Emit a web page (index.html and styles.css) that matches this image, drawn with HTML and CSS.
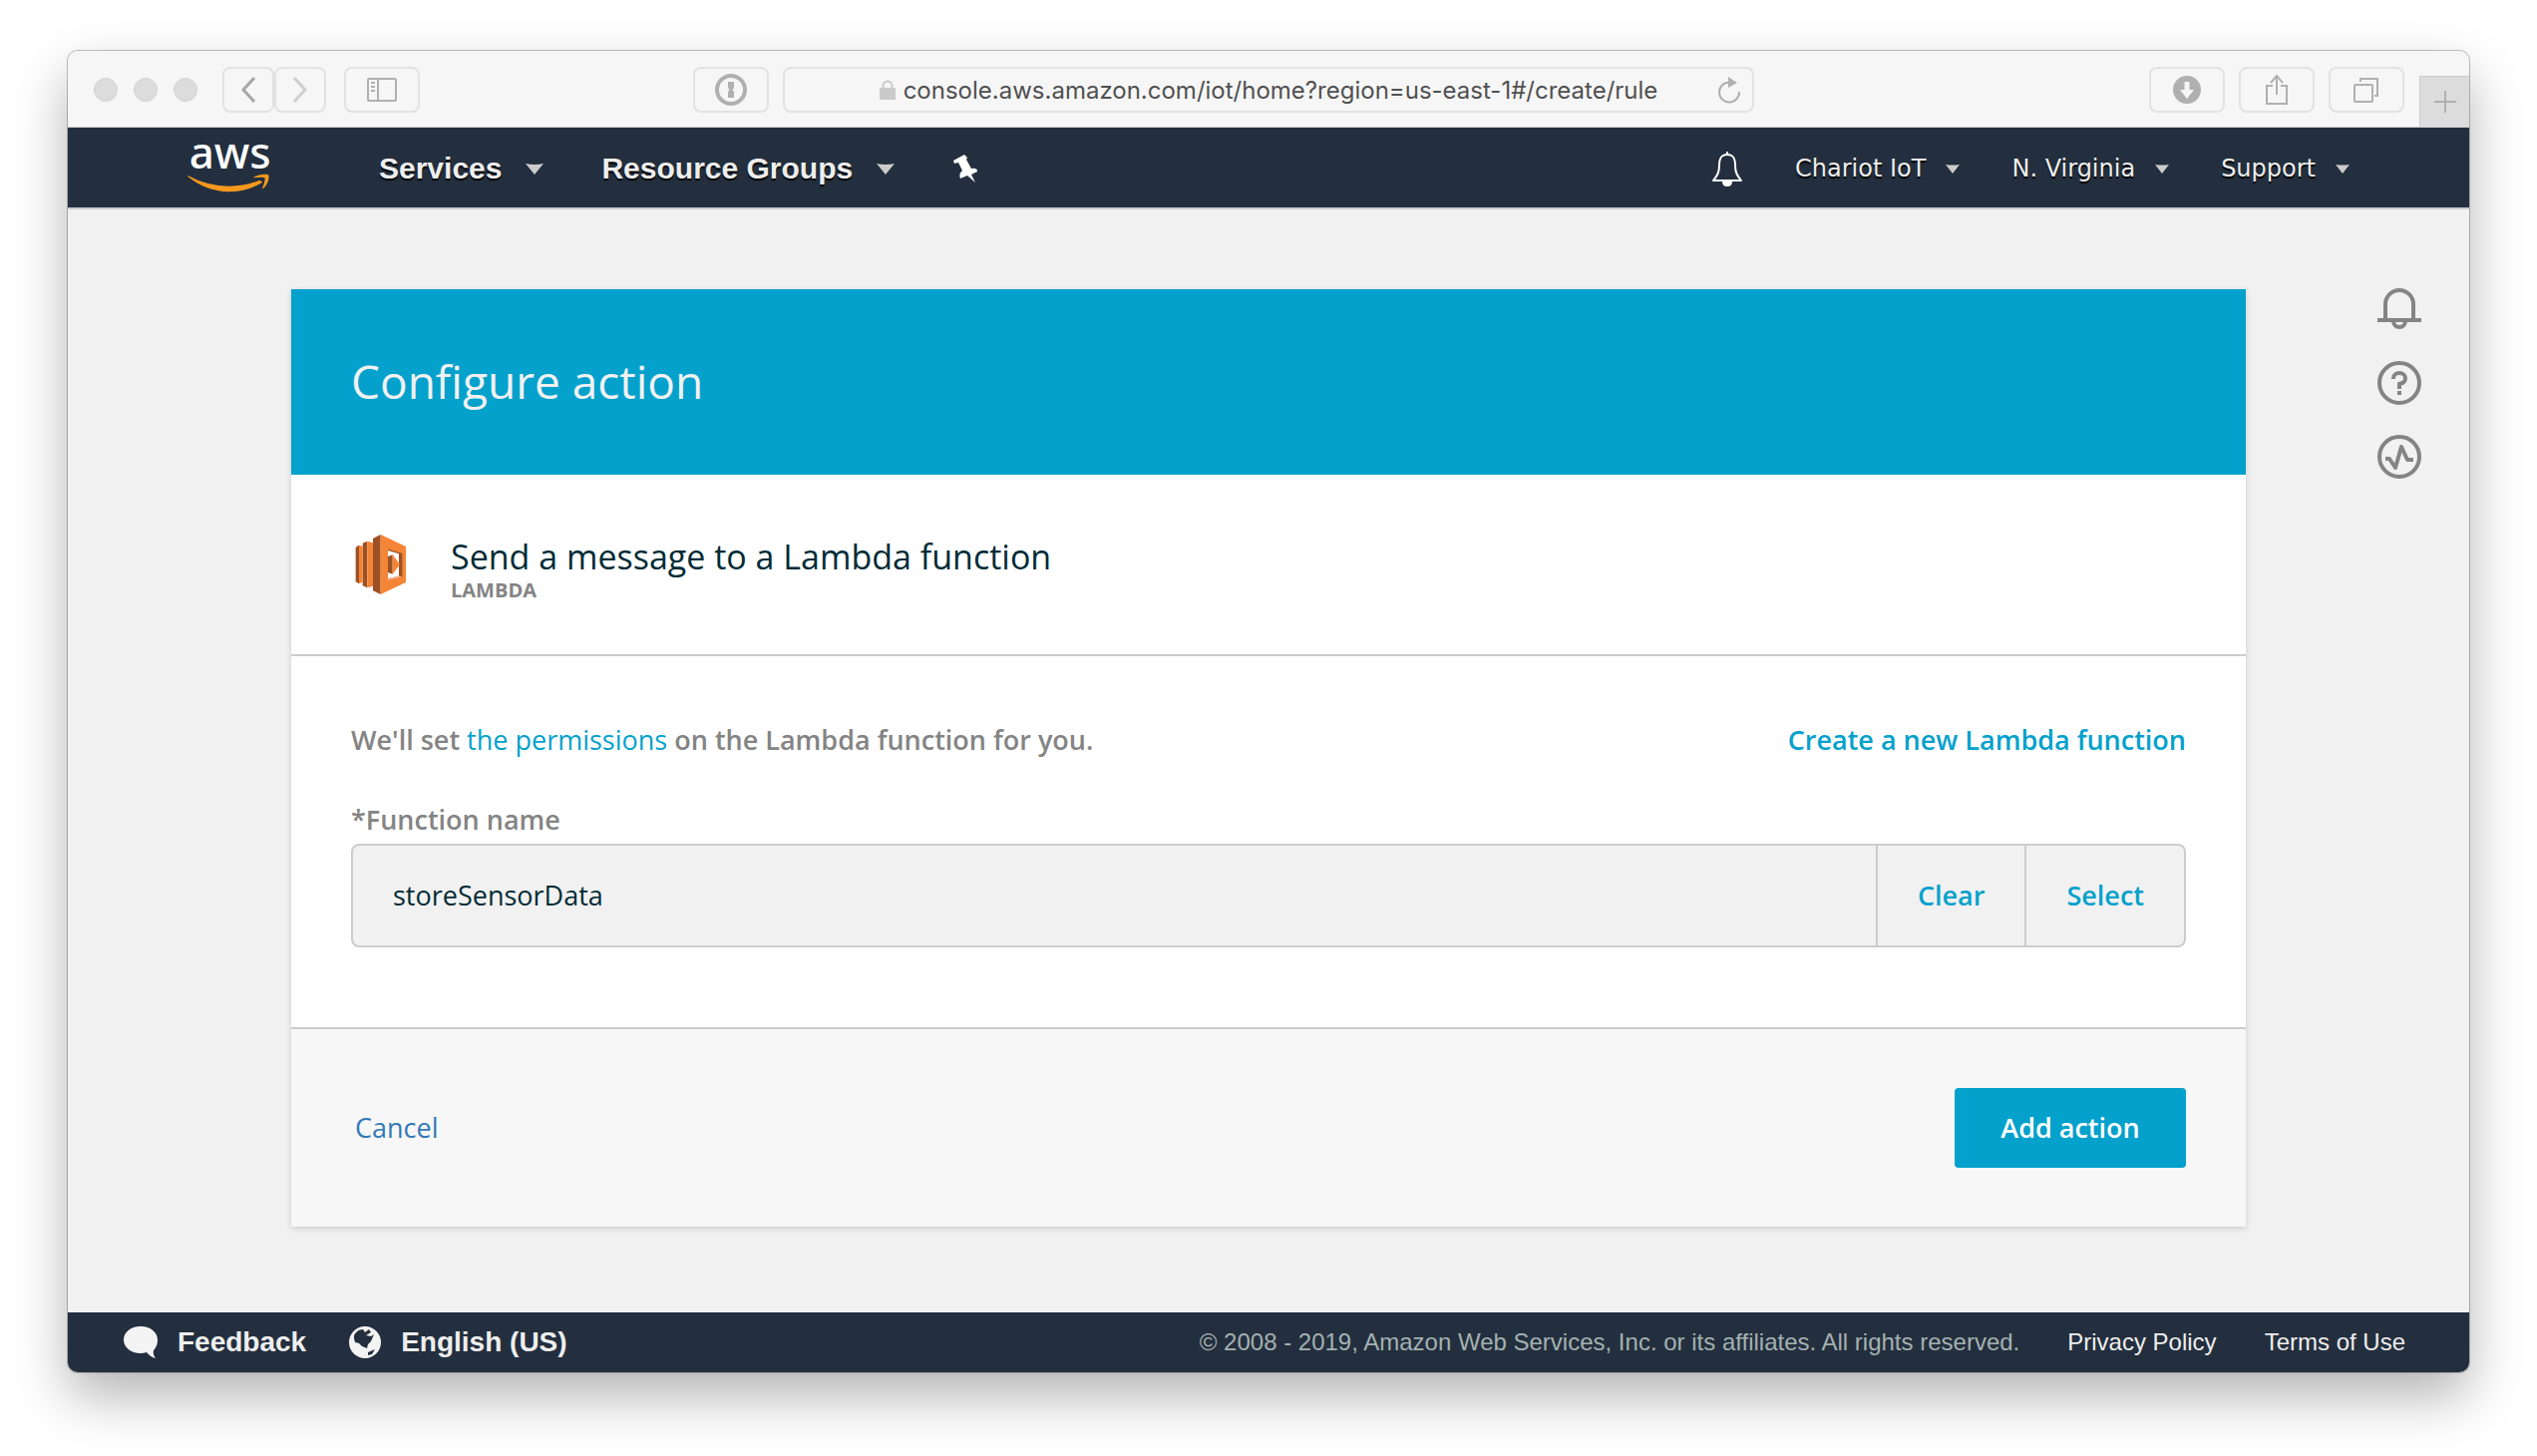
FILE: index.html
```html
<!DOCTYPE html>
<html lang="en">
<head>
<meta charset="utf-8">
<title>AWS IoT - Configure action</title>
<link rel="stylesheet" href="styles.css">
</head>
<body>
<div class="window">
  <div class="toolbar">
    <div class="lights"><span class="light"></span><span class="light"></span><span class="light"></span></div>
    <div class="history">
      <button class="tool tool-narrow" type="button" aria-label="Back"><svg width="14" height="26" viewBox="0 0 14 26" fill="none" stroke="#a6a6a6" stroke-width="3"><path d="M13 1 2 13l11 12"/></svg></button>
      <button class="tool tool-narrow" type="button" aria-label="Forward"><svg width="14" height="26" viewBox="0 0 14 26" fill="none" stroke="#cfcfcf" stroke-width="3"><path d="M1 1l11 12L1 25"/></svg></button>
    </div>
    <button class="tool" type="button" aria-label="Sidebar"><svg width="30" height="24" viewBox="0 0 30 24" fill="none" stroke="#b0b0b0" stroke-width="2"><rect x="1" y="1" width="28" height="22" rx="1"/><path d="M11 1v22M4 5h4M4 9h4M4 13h4"/></svg></button>
    <div class="address-area">
      <button class="tool" type="button" aria-label="Passwords"><svg width="32" height="32" viewBox="0 0 32 32"><circle cx="16" cy="16" r="14" fill="none" stroke="#b0b0b0" stroke-width="4"/><path fill="#b0b0b0" d="M13 8h6v6l-1.500 2 1.500 2v6h-6v-6l1.500-2-1.500-2z"/></svg></button>
      <div class="address">
        <label class="address-field">
          <svg width="16" height="20" viewBox="0 0 16 20"><path d="M3.500 10V6a4.500 4.500 0 0 1 9 0v4" fill="none" stroke="#cacaca" stroke-width="2"/><rect y="8" width="16" height="12" rx="1" fill="#cacaca"/></svg>
          <input class="address-input" type="text" aria-label="Address" value="console.aws.amazon.com/iot/home?region=us-east-1#/create/rule">
        </label>
        <button class="reload" type="button" aria-label="Reload"><svg width="24" height="28" viewBox="0 0 24 28"><path d="M12 6.500A10 10 0 1 0 22 16" fill="none" stroke="#b0b0b0" stroke-width="2"/><path d="M11 1l9 6-9 5z" fill="#b0b0b0"/></svg></button>
      </div>
    </div>
    <div class="actions">
      <button class="tool" type="button" aria-label="Downloads"><svg width="28" height="28" viewBox="0 0 28 28"><circle cx="14" cy="14" r="14" fill="#b0b0b0"/><path d="M11.500 6h5v8h4.500l-7 9-7-9h4.500z" fill="#f6f6f6"/></svg></button>
      <button class="tool" type="button" aria-label="Share"><svg width="24" height="32" viewBox="0 0 24 32" fill="none" stroke="#b0b0b0" stroke-width="2"><path d="M8 12H2v18h20V12h-6M12 21V3M6 9l6-7 6 7"/></svg></button>
      <button class="tool" type="button" aria-label="Tabs"><svg width="26" height="26" viewBox="0 0 26 26" fill="none" stroke="#b0b0b0" stroke-width="2"><rect x="1" y="8" width="18" height="17" rx="1"/><path d="M7 5V2h17v17h-3"/></svg></button>
    </div>
    <button class="new-tab" type="button" aria-label="New tab"><svg width="22" height="22" viewBox="0 0 22 22" stroke="#b0b0b0" stroke-width="2"><path d="M11 0v22M0 11h22"/></svg></button>
  </div>

  <nav class="nav">
    <a class="logo" href="#" aria-label="AWS home">
      <svg class="logo-art" width="82" height="50" viewBox="0 0 246 150"><text class="logo-text" x="5" y="77">aws</text><g fill="#f8991d"><path d="M1 99Q60 131 125 131 175 131 217 113L226 119Q180 148 122 148 55 146 1 102z"/><path d="M199 104Q215 94 240 95 246 96 245 104 243 125 227 139L225 137Q234 117 233 106 225 102 200 106z"/></g></svg>
    </a>
    <div class="nav-main">
      <button class="nav-item nav-strong" type="button">Services<svg width="18" height="12" viewBox="0 0 18 12"><path d="M0 1q9 2 18 0L9 12z" fill="#ccc"/></svg></button>
      <button class="nav-item nav-strong" type="button">Resource Groups<svg width="18" height="12" viewBox="0 0 18 12"><path d="M0 1q9 2 18 0L9 12z" fill="#ccc"/></svg></button>
      <button class="nav-item" type="button" aria-label="Pin shortcuts"><svg width="26" height="28" viewBox="0 0 26 28" fill="#fff"><path d="M1 6 12 0l3 3-1 2 5 9q6-1 6 3l-6 3 4 8-8-7-7 3q-2-5 2-8L6 8 2 9z"/></svg></button>
    </div>
    <div class="nav-side">
      <button class="nav-item" type="button" aria-label="Notifications"><svg width="32" height="36" viewBox="0 0 32 36" fill="none" stroke="#fff" stroke-width="2" stroke-linejoin="round"><path d="M16 4C9 4 8 9 8 15c0 7-2 10-6 15h28c-4-5-6-8-6-15 0-6-1-11-8-11z"/><path d="M16 1v3M12 31q0 4 4 4t4-4z" fill="#fff"/></svg></button>
      <button class="nav-item" type="button">Chariot IoT<svg width="14" height="10" viewBox="0 0 14 10"><path d="M0 1q7 1 14 0L7 10z" fill="#ccc"/></svg></button>
      <button class="nav-item" type="button">N. Virginia<svg width="14" height="10" viewBox="0 0 14 10"><path d="M0 1q7 1 14 0L7 10z" fill="#ccc"/></svg></button>
      <button class="nav-item" type="button">Support<svg width="14" height="10" viewBox="0 0 14 10"><path d="M0 1q7 1 14 0L7 10z" fill="#ccc"/></svg></button>
    </div>
  </nav>

  <div class="page">
    <main class="card">
      <header class="card-header"><h1 class="title">Configure action</h1></header>
      <section class="service">
        <svg width="60" height="60" viewBox="36 48 180 180">
          <path fill="#9d5025" d="M50 86 60 80V196L50 190zM71 74 85 68V208L71 202zM102 60 125 48V228L102 217z"/>
          <path fill="#f58536" d="M60 80 71 84V191L60 196zM85 68 102 73V203L85 208zM125 48 201 84V192L125 228z"/>
          <path fill="#9d5025" d="M147 92 190 104V176L147 186z"/>
          <path fill="#fff" d="M147 96 180 106V174L147 181z"/>
          <path fill="#9d5025" d="M147 114 161 109V167L147 162z"/>
          <path fill="#f58536" d="M161 109 183 138 161 167z"/>
          <path fill="#f8b27f" d="M147 181 180 172 190 176 147 186z"/>
        </svg>
        <div>
          <h2 class="service-title">Send a message to a Lambda function</h2>
          <p class="service-name">LAMBDA</p>
        </div>
      </section>
      <section class="settings">
        <div class="intro">
          <p class="intro-text">We'll set <a class="inline-link" href="#">the permissions</a> on the Lambda function for you.</p>
          <a class="create-link" href="#">Create a new Lambda function</a>
        </div>
        <label class="field-label" for="function-name">*Function name</label>
        <div class="field">
          <input class="field-input" id="function-name" type="text" value="storeSensorData" readonly>
          <button class="field-button" type="button">Clear</button>
          <button class="field-button" type="button">Select</button>
        </div>
      </section>
      <footer class="card-footer">
        <a class="cancel" href="#">Cancel</a>
        <button class="primary" type="button">Add action</button>
      </footer>
    </main>
    <aside class="side">
      <button class="side-button" type="button" aria-label="Alerts"><svg width="44" height="44" viewBox="0 0 44 44" fill="none" stroke="#848484" stroke-width="4"><path d="M0 33h44M8 33V17a14 14 0 0 1 28 0v16M16 34a6 6 0 0 0 12 0"/></svg></button>
      <button class="side-button" type="button" aria-label="Help"><svg width="44" height="44" viewBox="0 0 44 44" fill="none" stroke="#848484" stroke-width="4"><circle cx="22" cy="22" r="20"/><path d="M16 18v-1a6 5 0 0 1 12 0c0 4-2 5-6 6v5M22 30v4"/></svg></button>
      <button class="side-button" type="button" aria-label="Activity"><svg width="44" height="44" viewBox="0 0 44 44" fill="none" stroke="#848484" stroke-width="4" stroke-linejoin="round"><circle cx="22" cy="22" r="20"/><path d="M8 24h4l6 9 6-21 6 13h6"/></svg></button>
    </aside>
  </div>

  <footer class="footer">
    <div class="footer-group">
      <a class="footer-strong" href="#"><svg width="34" height="32" viewBox="0 0 34 32"><path d="M17 0C7 0 0 6 0 13.500S7 27 17 27q3 0 6-1 4 5 9 6-3-4-2-8 4-4 4-10.500C34 6 27 0 17 0z" fill="#f4f4f4"/></svg>Feedback</a>
      <a class="footer-strong" href="#"><svg width="32" height="32" viewBox="0 0 32 32"><circle cx="16" cy="16" r="16" fill="#f4f4f4"/><path d="M5 9Q8 3 14 3l2 3 4-3 2 3-5 3 5 1 3-2-3 7-3 3-1 4-5-2-3-3-4-1-1-4zM19 26l7-3-3 5-4 1z" fill="#232f3e"/></svg>English (US)</a>
    </div>
    <div class="footer-legal">
      <span class="copyright">© 2008 - 2019, Amazon Web Services, Inc. or its affiliates. All rights reserved.</span>
      <a class="footer-link" href="#">Privacy Policy</a>
      <a class="footer-link" href="#">Terms of Use</a>
    </div>
  </footer>
</div>
</body>
</html>
```
FILE: styles.css
```css
* { box-sizing: border-box; }

body {
  margin: 0;
  min-height: 100vh;
  padding: 51px 68px 84px;
  display: flex;
  background: #fff;
  font: 27px/36px "Open Sans", sans-serif;
}

svg { display: block; flex: none; }
h1, h2, p { margin: 0; }
a { text-decoration: none; }

button {
  margin: 0;
  padding: 0;
  border: 0;
  background: none;
  font: inherit;
  color: inherit;
}

.window {
  flex: 1;
  min-width: 0;
  display: flex;
  flex-direction: column;
  overflow: hidden;
  border-radius: 10px;
  background: #f1f1f1;
  box-shadow: 0 0 0 1px rgba(0, 0, 0, .24), 0 24px 54px rgba(0, 0, 0, .3);
}

/* Browser toolbar */
.toolbar {
  display: flex;
  align-items: center;
  height: 77px;
  padding: 2px 0 0 26px;
  background: #f6f6f6;
  border-bottom: 1px solid #ccc;
}

.lights { display: flex; gap: 16px; margin-right: 25px; }

.light {
  width: 24px;
  height: 24px;
  border: 1px solid #d2d2d2;
  border-radius: 50%;
  background: #dcdcdc;
}

.history { display: flex; margin-right: 18px; }

.tool {
  display: flex;
  flex: none;
  align-items: center;
  justify-content: center;
  width: 76px;
  height: 46px;
  border: 2px solid #e2e2e2;
  border-radius: 8px;
}

.tool-narrow { width: 52px; }

.address-area {
  flex: 1;
  min-width: 0;
  display: flex;
  gap: 14px;
  padding: 0 396px 0 274px;
}

.address {
  flex: 1;
  min-width: 0;
  display: grid;
  grid-template-columns: 1fr auto 1fr;
  align-items: center;
  height: 46px;
  padding: 0 11px;
  border: 2px solid #e2e2e2;
  border-radius: 8px;
}

.address-field {
  grid-column: 2;
  display: flex;
  align-items: center;
  gap: 8px;
}

.address-input {
  field-sizing: content;
  padding: 2px 0 0;
  border: 0;
  background: none;
  color: #505050;
  font: 24px/32px Inter, sans-serif;
}

.reload { justify-self: end; }
.actions { display: flex; gap: 14px; }

.new-tab {
  display: flex;
  align-self: flex-end;
  align-items: center;
  justify-content: center;
  width: 50px;
  height: 51px;
  margin-left: 15px;
  border: 1px solid #ccc;
  border-width: 1px 0 0 1px;
  background: #dcdcdc;
}

/* Console navigation */
.nav {
  display: flex;
  align-items: center;
  min-height: 82px;
  padding: 0 120px;
  background: #232f3e;
  border-bottom: 2px solid #ccc;
  color: #eee;
  font: 24px/32px Verdana, "DejaVu Sans", sans-serif;
}

.logo { margin-right: 110px; }
.logo-art { overflow: visible; }
.logo-text { font: 500 132px "Noto Sans", sans-serif; fill: #fff; }
.nav-main { display: flex; align-items: center; gap: 58px; padding-top: 2px; }
.nav-side { display: flex; align-items: center; gap: 52px; margin-left: auto; padding-top: 2px; }

.nav-item {
  display: flex;
  align-items: center;
  gap: 20px;
  white-space: nowrap;
  text-shadow: 0 2px 1px #000;
}

.nav-strong {
  gap: 24px;
  font: bold 30px/36px "Liberation Sans", sans-serif;
}

/* Page */
.page {
  flex: 1;
  display: grid;
  grid-template-columns: 224px 1fr 224px;
  align-items: start;
}

.card {
  grid-column: 2;
  margin: 80px 0 86px;
  background: #fff;
  box-shadow: 0 2px 6px rgba(0, 0, 0, .16);
}

.card-header {
  display: flex;
  align-items: center;
  min-height: 186px;
  padding: 0 60px 2px;
  background: #04a1cc;
}

.title { color: #f1f1f1; font-size: 46px; font-weight: 400; line-height: 64px; }

.service {
  display: flex;
  align-items: flex-start;
  gap: 40px;
  min-height: 182px;
  padding: 60px 60px 50px;
  border-bottom: 2px solid #ccc;
}

.service-title { color: #002b36; font-size: 34px; font-weight: 400; line-height: 44px; }
.service-name { color: #848484; font-size: 20px; font-weight: 700; line-height: 24px; }

.settings { padding: 60px 60px 80px; border-bottom: 2px solid #ccc; }

.intro {
  display: flex;
  justify-content: space-between;
  margin-bottom: 38px;
  font-weight: 600;
  line-height: 48px;
}

.intro-text { color: #848484; }
.inline-link { color: #04a1cc; font-weight: 400; }
.create-link { color: #04a1cc; }

.field-label {
  display: block;
  margin-bottom: 6px;
  color: #848484;
  font-weight: 600;
}

.field {
  display: flex;
  height: 104px;
  overflow: hidden;
  border: 2px solid #ccc;
  border-radius: 8px;
  background: #f1f1f1;
}

.field-input {
  flex: 1;
  min-width: 0;
  padding: 0 40px;
  border: 0;
  background: none;
  color: #002b36;
  font: inherit;
}

.field-button {
  padding: 0 40px;
  border-left: 2px solid #ccc;
  color: #04a1cc;
  font-weight: 600;
}

.card-footer {
  display: flex;
  align-items: center;
  justify-content: space-between;
  min-height: 198px;
  padding: 0 60px;
  background: #f7f7f7;
}

.cancel { padding-left: 4px; color: #337ab7; }

.primary {
  min-width: 232px;
  height: 80px;
  padding: 0 44px;
  border-radius: 4px;
  background: #04a1cc;
  color: #fff;
  font-weight: 600;
}

.side {
  display: flex;
  flex-direction: column;
  align-items: flex-end;
  gap: 30px;
  padding: 78px 48px 0 0;
}

/* Console footer */
.footer {
  display: flex;
  align-items: center;
  justify-content: space-between;
  min-height: 60px;
  padding: 0 64px 0 56px;
  background: #232f3e;
  font: 24px/32px "Liberation Sans", sans-serif;
  white-space: nowrap;
}

.footer-group { display: flex; gap: 43px; }
.footer-legal { display: flex; gap: 48px; }

.footer-strong {
  display: flex;
  align-items: center;
  gap: 20px;
  color: #eee;
  font-size: 28px;
  font-weight: 700;
}

.copyright { color: #a4b1b1; }
.footer-link { color: #eee; }
```
